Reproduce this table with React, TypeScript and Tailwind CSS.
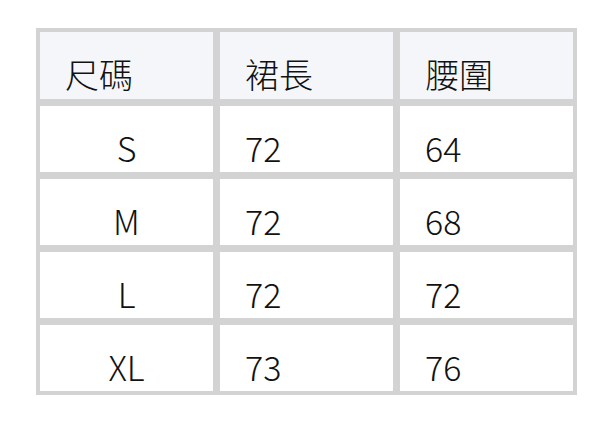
import React from 'react';

const headers = ['尺碼', '裙長', '腰圍'];

const rows = [
    ['S', '72', '64'],
    ['M', '72', '68'],
    ['L', '72', '72'],
    ['XL', '73', '76'],
];

export default function App() {
    return (
        <div className="min-h-screen bg-white pl-[36px] pt-[28px]" style={{ fontFamily: '"Noto Sans CJK TC", "Noto Sans", sans-serif' }}>
            {/* Size chart */}
            <div className="w-[541px] bg-[#d3d3d3] p-[4px] grid grid-cols-3 gap-[7px] text-[34px] font-light text-[#111111] grid-rows-[67px_66px_66px_66px_66px]">
                {headers.map((h) => (
                    <div key={h} className="bg-[#f5f6fa] flex items-end pl-[25px] pb-[1px]">
                        <span className="leading-[49px]">{h}</span>
                    </div>
                ))}
                {rows.map((row) =>
                    row.map((cell, i) => (
                        <div
                            key={row[0] + i}
                            className={`bg-white flex items-end ${i === 0 ? 'justify-center' : 'pl-[25px]'}`}
                        >
                            <span className="leading-[49px]">{cell}</span>
                        </div>
                    ))
                )}
            </div>
        </div>
    );
}
